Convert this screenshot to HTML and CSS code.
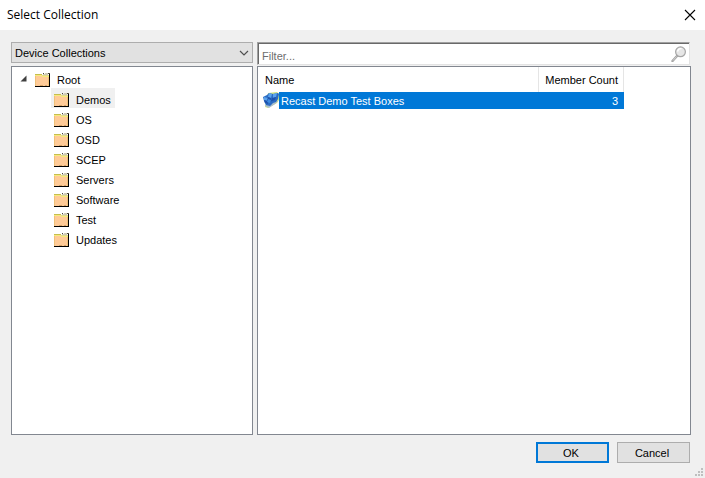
FILE: index.html
```html
<!DOCTYPE html>
<html lang="en">
<head>
<meta charset="utf-8">
<meta name="viewport" content="width=device-width, initial-scale=1">
<title>Select Collection</title>
<link rel="stylesheet" href="styles.css">
</head>
<body>
<svg class="defs" aria-hidden="true">
  <symbol id="folder" viewBox="0 0 16 16">
    <path fill="#000" d="M0 14h15v1H0zM14 2h1v12h-1z"/>
    <path fill="#ffcb98" d="M0 4h14v10H0z"/>
    <path fill="#c8bc4c" d="M0 2h7v1H0z"/>
    <path fill="#f4ec7c" d="M0 3h7v1H0zM7 4h7v1H7z"/>
    <path fill="#e0d890" d="M7 3h7v1H7z"/>
    <path fill="#cfcbb8" d="M8 2h5v1H8zM10 1h3v1h-3z"/>
    <path fill="#4c4838" d="M8 1h1v1H8zM13 1h2v1h-2z"/>
    <path fill="#f0c078" d="M0 4h1v10H0zM13 5h1v9h-1z"/>
    <path fill="#d8a468" d="M5 13h3v1H5zM10 13h2v1h-2z"/>
  </symbol>
</svg>
<main class="dialog" role="dialog" aria-labelledby="title">
  <header class="titlebar">
    <h1 id="title">Select Collection</h1>
    <button class="close" type="button" aria-label="Close">
      <svg width="12" height="12" viewBox="0 0 12 12"><path d="M1 1l10 10M11 1L1 11" fill="none" stroke="#000" stroke-width="1.1"/></svg>
    </button>
  </header>
  <div class="content">
    <section class="pane">
      <div class="picker">
        <select aria-label="Collection type"><option>Device Collections</option></select>
        <svg class="chevron" width="10" height="6" viewBox="0 0 10 6"><path d="M1 1l4 4 4-4" fill="none" stroke="#505050" stroke-width="1.2"/></svg>
      </div>
      <ul class="tree box" role="tree" aria-label="Folders">
        <li role="treeitem" aria-expanded="true">
          <div class="node">
            <svg class="twisty" width="7" height="7" viewBox="0 0 7 7"><path d="M6.500 .5v6h-6z" fill="#404040"/></svg>
            <span class="item"><svg class="icon"><use href="#folder"/></svg><span>Root</span></span>
          </div>
          <ul class="children" role="group">
            <li class="node" role="treeitem" aria-selected="true"><span class="item selected"><svg class="icon"><use href="#folder"/></svg><span>Demos</span></span></li>
            <li class="node" role="treeitem"><span class="item"><svg class="icon"><use href="#folder"/></svg><span>OS</span></span></li>
            <li class="node" role="treeitem"><span class="item"><svg class="icon"><use href="#folder"/></svg><span>OSD</span></span></li>
            <li class="node" role="treeitem"><span class="item"><svg class="icon"><use href="#folder"/></svg><span>SCEP</span></span></li>
            <li class="node" role="treeitem"><span class="item"><svg class="icon"><use href="#folder"/></svg><span>Servers</span></span></li>
            <li class="node" role="treeitem"><span class="item"><svg class="icon"><use href="#folder"/></svg><span>Software</span></span></li>
            <li class="node" role="treeitem"><span class="item"><svg class="icon"><use href="#folder"/></svg><span>Test</span></span></li>
            <li class="node" role="treeitem"><span class="item"><svg class="icon"><use href="#folder"/></svg><span>Updates</span></span></li>
          </ul>
        </li>
      </ul>
    </section>
    <section class="pane">
      <div class="filter">
        <input type="text" placeholder="Filter..." aria-label="Filter">
        <svg width="16" height="16" viewBox="0 0 16 16">
          <path d="M6 10l-4.500 5" stroke="#a4a4a4" stroke-width="2.400" stroke-linecap="round"/>
          <path d="M5.500 10.500l-3.500 4" stroke="#dedede" stroke-width=".8"/>
          <circle cx="9.500" cy="5.800" r="4.900" fill="#e6e6e6" stroke="#a6a6a6" stroke-width="1.200"/>
          <path d="M6.500 5.500c.5-2 2-3 4-2.800" fill="none" stroke="#fff" stroke-width="1.400"/>
        </svg>
      </div>
      <div class="box">
        <table>
          <thead><tr><th class="name" scope="col">Name</th><th class="count" scope="col">Member Count</th></tr></thead>
          <tbody>
            <tr>
              <td class="name"><div class="entry">
                <svg class="icon" viewBox="0 0 16 16">
                  <path fill="#cfe27c" d="M5 1l9-1 2 2v6l-2 3-9 5-3-1z"/>
                  <path fill="#a9bccb" d="M3 12l4 1 6-5 2 1-3 3-6 4-4-2z"/>
                  <path fill="#2a6cc4" d="M6 1l4 1 5-1 1 1-1 5-2 3-3 1-3 3-4-1-2-4-1-4 4-2z"/>
                  <path fill="#5ba3ec" d="M6 1l3 1-1 4-3-1zM10 2l4-1-1 4-3 1zM1 5l4 1-1 3-3-1z"/>
                  <path fill="#1d52ac" d="M5 5l3 1 1 3-3 1-2-1zM9 6l4-1-1 3-3 1zM1 8l4 1v3l-3-1z"/>
                  <path fill="#3d8be0" d="M5 7l3 1-1 3-3-1z"/>
                </svg>
                <span class="label">Recast Demo Test Boxes</span>
              </div></td>
              <td class="count">3</td>
            </tr>
          </tbody>
        </table>
      </div>
    </section>
  </div>
  <footer class="actions">
    <button class="default" type="button">OK</button>
    <button type="button">Cancel</button>
  </footer>
  <svg class="grip" width="8" height="8" viewBox="0 0 8 8" aria-hidden="true"><path fill="#bfbfbf" d="M6 0h2v2H6zM3 3h2v2H3zM6 3h2v2H6zM0 6h2v2H0zM3 6h2v2H3zM6 6h2v2H6z"/></svg>
</main>
</body>
</html>
```
FILE: styles.css
```css
* { box-sizing: border-box; }

body {
  margin: 0;
  font: 11px/14px "Liberation Sans", Arial, sans-serif;
  color: #000;
}

button, input, select { font: inherit; color: inherit; }

ul { list-style: none; margin: 0; padding: 0; }

.defs { position: absolute; width: 0; height: 0; }

.icon { width: 16px; height: 16px; flex: none; }

.dialog {
  position: relative;
  display: flex;
  flex-direction: column;
  min-height: 100vh;
  background: #f0f0f0;
}

.titlebar {
  display: flex;
  align-items: center;
  justify-content: space-between;
  height: 30px;
  padding: 0 9px 0 7px;
  background: #fff;
}

.titlebar h1 {
  margin: 0;
  font: 12px/16px "Open Sans", "Noto Sans", sans-serif;
}

.close {
  display: flex;
  padding: 0;
  border: 0;
  background: none;
}

.content {
  flex: 1;
  display: grid;
  grid-template-columns: 242fr 434fr;
  gap: 4px;
  padding: 12px 14px 0 11px;
}

.pane {
  display: grid;
  grid-template-rows: 24px 1fr;
}

.box {
  border: 1px solid #828790;
  background: #fff;
}

.picker {
  position: relative;
  height: 21px;
}

.picker select {
  appearance: none;
  width: 100%;
  height: 100%;
  padding: 0 20px 0 3px;
  border: 1px solid #adadad;
  border-radius: 0;
  background: #e1e1e1;
}

.chevron {
  position: absolute;
  right: 4px;
  top: 8px;
  pointer-events: none;
}

.filter {
  display: flex;
  align-items: center;
  height: 23px;
  margin-right: 1px;
  padding-right: 2px;
  background: #fff;
  border: 1px solid;
  border-color: #a0a0a0 #e3e3e3 #e3e3e3 #a0a0a0;
  box-shadow: inset 1px 1px #696969;
}

.filter input {
  flex: 1;
  min-width: 0;
  height: 100%;
  padding: 4px 4px 0;
  border: 0;
  outline: 0;
  background: none;
}

.filter input::placeholder { color: #6d6d6d; opacity: 1; }

.tree { padding: 1px 0 0 7px; }

.node { display: flex; height: 20px; }

.twisty { margin: 7px 5px 0 1px; }

.children { padding-left: 32px; }

.item {
  display: flex;
  gap: 6px;
  padding: 4px 4px 0 3px;
  line-height: 16px;
}

.selected { background: #f0f0f0; }

table {
  width: 366px;
  border-collapse: separate;
  border-spacing: 0;
  table-layout: fixed;
}

th, td { padding: 0; font-weight: normal; }

th {
  height: 25px;
  padding: 1px 0 0 7px;
  text-align: left;
  white-space: nowrap;
  border-right: 1px solid #e5e5e5;
}

.count { width: 85px; text-align: right; }

th.count { padding: 1px 5px 0 0; }

td.count { padding-right: 6px; background: #0078d7; color: #fff; }

.entry {
  display: flex;
  height: 17px;
  padding-left: 5px;
}

.label {
  flex: 1;
  padding: 2px 0 0 2px;
  background: #0078d7;
  color: #fff;
}

.actions {
  display: flex;
  justify-content: flex-end;
  gap: 8px;
  padding: 7px 15px 15px;
}

.actions button {
  width: 73px;
  height: 21px;
  padding: 0 3px 0 0;
  border: 1px solid #adadad;
  background: #e1e1e1;
}

.actions .default { border: 2px solid #0078d7; }

.grip { position: absolute; right: 2px; bottom: 2px; }
```
